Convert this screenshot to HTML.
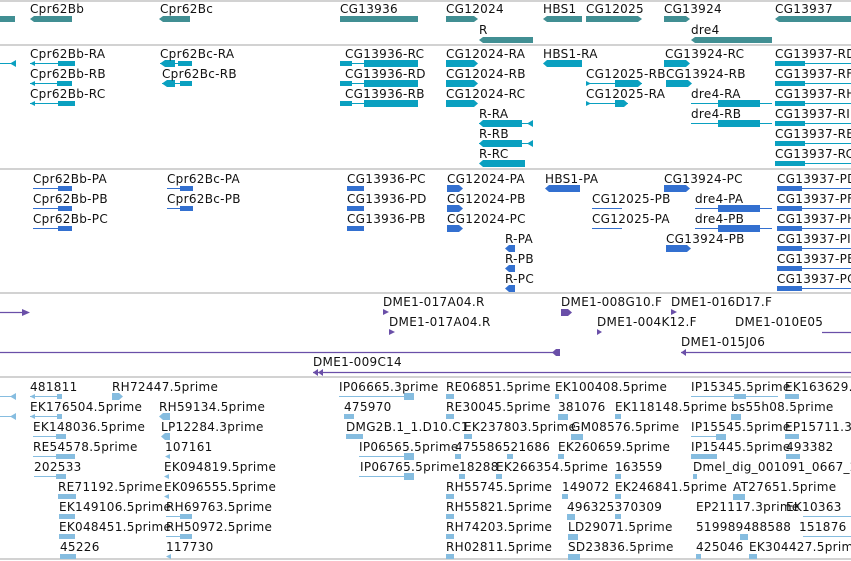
<!DOCTYPE html>
<html><head><meta charset="utf-8"><style>
html,body{margin:0;padding:0;background:#fff;overflow:hidden}
svg{display:block}
text{font-family:"DejaVu Sans","Liberation Sans",sans-serif;font-size:12px;letter-spacing:0.3px;fill:#111}
</style></head><body>
<svg width="851" height="561" viewBox="0 0 851 561" xmlns="http://www.w3.org/2000/svg">
<g stroke="#c4c4c4" stroke-width="1.5">
<line x1="0" y1="1" x2="851" y2="1"/><line x1="0" y1="45" x2="851" y2="45"/>
<line x1="0" y1="169" x2="851" y2="169"/><line x1="0" y1="293" x2="851" y2="293"/>
<line x1="0" y1="377" x2="851" y2="377"/><line x1="0" y1="559" x2="851" y2="559"/>
</g>
<!-- Track 1 genes -->
<g fill="#418f93">
<rect x="0" y="16" width="15" height="6"/>
<polygon points="30,19 34,16 72,16 72,22 34,22"/>
<polygon points="159,19 163,16 190,16 190,22 163,22"/>
<rect x="340" y="16" width="78" height="6"/>
<polygon points="446,16 474,16 478,19 474,22 446,22"/>
<polygon points="543,19 547,16 582,16 582,22 547,22"/>
<polygon points="586,16 638,16 642,19 638,22 586,22"/>
<polygon points="664,16 686,16 690,19 686,22 664,22"/>
<polygon points="775,19 779,16 851,16 851,22 779,22"/>
<polygon points="479,40 483,37 533,37 533,43 483,43"/>
<polygon points="691,40 695,37 772,37 772,43 695,43"/>
</g>
<text x="30" y="13">Cpr62Bb</text><text x="160" y="13">Cpr62Bc</text><text x="340" y="13">CG13936</text>
<text x="446" y="13">CG12024</text><text x="543" y="13">HBS1</text><text x="586" y="13">CG12025</text>
<text x="664" y="13">CG13924</text><text x="775" y="13">CG13937</text>
<text x="479" y="34">R</text><text x="691" y="34">dre4</text>
<!-- Track 2 transcripts -->
<g fill="#0aa0c0" stroke="#0aa0c0">
<g stroke-width="1">
<line x1="0" y1="63.5" x2="16" y2="63.5"/>
<line x1="30" y1="63.5" x2="75" y2="63.5"/><line x1="30" y1="83.5" x2="72" y2="83.5"/><line x1="30" y1="103.5" x2="75" y2="103.5"/>
<line x1="160" y1="63.5" x2="192" y2="63.5"/><line x1="162" y1="83.5" x2="192" y2="83.5"/>
<line x1="340" y1="63.5" x2="418" y2="63.5"/><line x1="340" y1="83.5" x2="418" y2="83.5"/><line x1="340" y1="103.5" x2="418" y2="103.5"/>
<line x1="586" y1="83.5" x2="642" y2="83.5"/><line x1="586" y1="103.5" x2="628" y2="103.5"/>
<line x1="691" y1="103.5" x2="772" y2="103.5"/><line x1="691" y1="123.5" x2="772" y2="123.5"/>
<line x1="775" y1="63.5" x2="851" y2="63.5"/><line x1="775" y1="83.5" x2="851" y2="83.5"/><line x1="775" y1="103.5" x2="851" y2="103.5"/>
<line x1="775" y1="123.5" x2="851" y2="123.5"/><line x1="775" y1="143.5" x2="851" y2="143.5"/><line x1="775" y1="163.5" x2="851" y2="163.5"/>
<line x1="479" y1="123.5" x2="533" y2="123.5"/><line x1="479" y1="143.5" x2="533" y2="143.5"/>
</g>
<g stroke="none">
<polygon points="10,63.5 16,60 16,67"/>
<rect x="58" y="61" width="17" height="5"/><rect x="57" y="81" width="15" height="5"/><rect x="58" y="101" width="17" height="5"/>
<polygon points="30,63.5 35,61 35,66"/><polygon points="30,83.5 35,81 35,86"/><polygon points="30,103.5 35,101 35,106"/>
<polygon points="160,63.5 165,60 175,60 175,67 165,67"/><rect x="178" y="61" width="14" height="5"/>
<polygon points="162,83.5 167,80 175,80 175,87 167,87"/><rect x="180" y="81" width="12" height="5"/>
<rect x="340" y="61" width="12" height="5"/><rect x="364" y="60" width="54" height="7"/>
<rect x="340" y="81" width="12" height="5"/><rect x="364" y="80" width="54" height="7"/>
<rect x="340" y="101" width="12" height="5"/><rect x="364" y="100" width="54" height="7"/>
<polygon points="446,60 474,60 478,63.5 474,67 446,67"/><polygon points="446,80 474,80 478,83.5 474,87 446,87"/><polygon points="446,100 474,100 478,103.5 474,107 446,107"/>
<polygon points="543,63.5 547,60 582,60 582,67 547,67"/>
<polygon points="586,81 591,83.5 586,86"/><polygon points="615,80 638,80 642,83.5 638,87 615,87"/>
<polygon points="586,101 591,103.5 586,106"/><polygon points="615,100 624,100 628,103.5 624,107 615,107"/>
<polygon points="664,60 686,60 690,63.5 686,67 664,67"/><polygon points="666,80 688,80 692,83.5 688,87 666,87"/>
<rect x="718" y="100" width="42" height="7"/><rect x="718" y="120" width="42" height="7"/>
<polygon points="479,123.5 483,120 522,120 522,127 483,127"/><polygon points="527,123.5 533,120 533,127"/>
<polygon points="479,143.5 483,140 522,140 522,147 483,147"/><polygon points="527,143.5 533,140 533,147"/>
<polygon points="479,163.5 483,160 525,160 525,167 483,167"/>
<rect x="775" y="61" width="30" height="5"/><rect x="775" y="81" width="30" height="5"/><rect x="775" y="101" width="30" height="5"/>
<rect x="775" y="121" width="30" height="5"/><rect x="775" y="141" width="30" height="5"/><rect x="775" y="161" width="30" height="5"/>
</g></g>
<text x="30" y="58">Cpr62Bb-RA</text><text x="160" y="58">Cpr62Bc-RA</text><text x="345" y="58">CG13936-RC</text><text x="446" y="58">CG12024-RA</text><text x="543" y="58">HBS1-RA</text><text x="665" y="58">CG13924-RC</text><text x="775" y="58">CG13937-RD</text>
<text x="30" y="78">Cpr62Bb-RB</text><text x="162" y="78">Cpr62Bc-RB</text><text x="345" y="78">CG13936-RD</text><text x="446" y="78">CG12024-RB</text><text x="586" y="78">CG12025-RB</text><text x="666" y="78">CG13924-RB</text><text x="775" y="78">CG13937-RF</text>
<text x="30" y="98">Cpr62Bb-RC</text><text x="345" y="98">CG13936-RB</text><text x="446" y="98">CG12024-RC</text><text x="586" y="98">CG12025-RA</text><text x="691" y="98">dre4-RA</text><text x="775" y="98">CG13937-RH</text>
<text x="479" y="118">R-RA</text><text x="691" y="118">dre4-RB</text><text x="775" y="118">CG13937-RI</text>
<text x="479" y="138">R-RB</text><text x="775" y="138">CG13937-RE</text>
<text x="479" y="158">R-RC</text><text x="775" y="158">CG13937-RC</text>
<!-- Track 3 proteins -->
<g fill="#3370d0" stroke="#3370d0">
<g stroke-width="1">
<line x1="33" y1="188.5" x2="72" y2="188.5"/><line x1="33" y1="208.5" x2="72" y2="208.5"/><line x1="33" y1="228.5" x2="72" y2="228.5"/>
<line x1="167" y1="188.5" x2="193" y2="188.5"/><line x1="167" y1="208.5" x2="193" y2="208.5"/>
<line x1="592" y1="208.5" x2="622" y2="208.5"/><line x1="592" y1="228.5" x2="622" y2="228.5"/>
<line x1="695" y1="208.5" x2="772" y2="208.5"/><line x1="695" y1="228.5" x2="772" y2="228.5"/>
<line x1="777" y1="188.5" x2="851" y2="188.5"/><line x1="777" y1="208.5" x2="851" y2="208.5"/><line x1="777" y1="228.5" x2="851" y2="228.5"/>
<line x1="777" y1="248.5" x2="851" y2="248.5"/><line x1="777" y1="268.5" x2="851" y2="268.5"/><line x1="777" y1="288.5" x2="851" y2="288.5"/>
</g>
<g stroke="none">
<rect x="58" y="186" width="14" height="5"/><rect x="58" y="206" width="14" height="5"/><rect x="58" y="226" width="14" height="5"/>
<rect x="180" y="186" width="13" height="5"/><rect x="180" y="206" width="13" height="5"/>
<rect x="347" y="186" width="17" height="5"/><rect x="347" y="206" width="17" height="5"/><rect x="347" y="226" width="17" height="5"/>
<polygon points="447,185 459,185 463,188.5 459,192 447,192"/><polygon points="447,205 459,205 463,208.5 459,212 447,212"/><polygon points="447,225 459,225 463,228.5 459,232 447,232"/>
<polygon points="545,188.5 549,185 580,185 580,192 549,192"/>
<polygon points="664,185 686,185 690,188.5 686,192 664,192"/>
<polygon points="666,245 687,245 691,248.5 687,252 666,252"/>
<rect x="718" y="205" width="42" height="7"/><rect x="718" y="225" width="42" height="7"/>
<polygon points="505,248.5 509,245 515,245 515,252 509,252"/><polygon points="505,268.5 509,265 515,265 515,272 509,272"/><polygon points="505,288.5 509,285 515,285 515,292 509,292"/>
<rect x="777" y="186" width="25" height="5"/><rect x="777" y="206" width="25" height="5"/><rect x="777" y="226" width="25" height="5"/>
<rect x="777" y="246" width="25" height="5"/><rect x="777" y="266" width="25" height="5"/><rect x="777" y="286" width="25" height="5"/>
</g></g>
<text x="33" y="183">Cpr62Bb-PA</text><text x="167" y="183">Cpr62Bc-PA</text><text x="347" y="183">CG13936-PC</text><text x="447" y="183">CG12024-PA</text><text x="545" y="183">HBS1-PA</text><text x="664" y="183">CG13924-PC</text><text x="777" y="183">CG13937-PD</text>
<text x="33" y="203">Cpr62Bb-PB</text><text x="167" y="203">Cpr62Bc-PB</text><text x="347" y="203">CG13936-PD</text><text x="447" y="203">CG12024-PB</text><text x="592" y="203">CG12025-PB</text><text x="695" y="203">dre4-PA</text><text x="777" y="203">CG13937-PF</text>
<text x="33" y="223">Cpr62Bb-PC</text><text x="347" y="223">CG13936-PB</text><text x="447" y="223">CG12024-PC</text><text x="592" y="223">CG12025-PA</text><text x="695" y="223">dre4-PB</text><text x="777" y="223">CG13937-PH</text>
<text x="505" y="243">R-PA</text><text x="666" y="243">CG13924-PB</text><text x="777" y="243">CG13937-PI</text>
<text x="505" y="263">R-PB</text><text x="777" y="263">CG13937-PE</text>
<text x="505" y="283">R-PC</text><text x="777" y="283">CG13937-PC</text>
<!-- Track 4 DME -->
<g fill="#6a4fa8" stroke="#6a4fa8">
<g stroke-width="1.2">
<line x1="0" y1="312.5" x2="24" y2="312.5"/><line x1="0" y1="352.5" x2="555" y2="352.5"/>
<line x1="681" y1="352.5" x2="851" y2="352.5"/><line x1="313" y1="372.5" x2="851" y2="372.5"/>
<line x1="822" y1="332.5" x2="851" y2="332.5"/>
</g>
<g stroke="none">
<polygon points="22,309 30,312.5 22,316"/>
<polygon points="383,309 389,312 383,315"/><polygon points="389,329 395,332 389,335"/>
<polygon points="561,309 568,309 572,312.5 568,316 561,316"/><polygon points="671,309 677,312 671,315"/>
<polygon points="597,329 602,332 597,335"/>
<polygon points="552,352.5 556,349 560,349 560,356 556,356"/>
<polygon points="681,352.5 686,349 686,356"/>
<polygon points="313,372.5 318,369 318,376"/><polygon points="318,372.5 323,369 323,376"/>
</g></g>
<text x="383" y="306">DME1-017A04.R</text><text x="561" y="306">DME1-008G10.F</text><text x="671" y="306">DME1-016D17.F</text>
<text x="389" y="326">DME1-017A04.R</text><text x="597" y="326">DME1-004K12.F</text><text x="735" y="326">DME1-010E05</text>
<text x="681" y="346">DME1-015J06</text>
<text x="313" y="366">DME1-009C14</text>
<!-- Track 5 ESTs -->
<g fill="#86bde0" stroke="#86bde0">
<g stroke-width="1">
<line x1="0" y1="396.5" x2="16" y2="396.5"/><line x1="0" y1="416.5" x2="16" y2="416.5"/>
<line x1="30" y1="396.5" x2="62" y2="396.5"/><line x1="30" y1="416.5" x2="62" y2="416.5"/>
<line x1="33" y1="436.5" x2="66" y2="436.5"/><line x1="33" y1="456.5" x2="75" y2="456.5"/><line x1="34" y1="476.5" x2="66" y2="476.5"/>
<line x1="339" y1="396.5" x2="414" y2="396.5"/><line x1="359" y1="456.5" x2="414" y2="456.5"/><line x1="359" y1="476.5" x2="414" y2="476.5"/>
<line x1="166" y1="516.5" x2="192" y2="516.5"/><line x1="166" y1="536.5" x2="192" y2="536.5"/>
<line x1="691" y1="396.5" x2="778" y2="396.5"/><line x1="691" y1="436.5" x2="725" y2="436.5"/>
<line x1="803" y1="516.5" x2="851" y2="516.5"/><line x1="803" y1="536.5" x2="851" y2="536.5"/>
</g>
<g stroke="none">
<polygon points="10,396.5 16,393 16,400"/><polygon points="10,416.5 16,413 16,420"/>
<polygon points="30,396.5 35,394 35,399"/><polygon points="30,416.5 35,414 35,419"/><rect x="57" y="394" width="5" height="5"/><rect x="57" y="414" width="5" height="5"/>
<rect x="56" y="434" width="10" height="5"/><rect x="56" y="454" width="19" height="5"/><rect x="56" y="474" width="10" height="5"/>
<rect x="58" y="494" width="18" height="5"/><rect x="59" y="514" width="16" height="5"/><rect x="59" y="534" width="16" height="5"/><rect x="60" y="554" width="16" height="5"/>
<polygon points="112,393 119,393 123,396.5 119,400 112,400"/>
<polygon points="159,416.5 163,413 170,413 170,420 163,420"/><polygon points="161,436.5 165,433 170,433 170,440 165,440"/>
<polygon points="165,456.5 170,454 170,459"/><polygon points="164,476.5 169,474 169,479"/><polygon points="164,496.5 169,494 169,499"/>
<rect x="180" y="514" width="12" height="5"/><rect x="180" y="534" width="12" height="5"/><polygon points="166,556.5 171,554 171,559"/>
<rect x="404" y="393" width="10" height="7"/><rect x="344" y="414" width="10" height="5"/><rect x="346" y="434" width="17" height="5"/>
<rect x="404" y="453" width="10" height="7"/><rect x="404" y="473" width="10" height="7"/>
<rect x="446" y="394" width="8" height="5"/><rect x="446" y="414" width="8" height="5"/><rect x="464" y="434" width="8" height="5"/>
<rect x="455" y="454" width="6" height="5"/><rect x="459" y="474" width="6" height="5"/><rect x="496" y="474" width="6" height="5"/><rect x="507" y="454" width="6" height="5"/>
<rect x="446" y="494" width="8" height="5"/><rect x="446" y="514" width="8" height="5"/><rect x="446" y="534" width="8" height="5"/><rect x="446" y="554" width="8" height="5"/>
<rect x="555" y="394" width="4" height="5"/><rect x="558" y="414" width="10" height="6"/><rect x="571" y="434" width="12" height="6"/>
<rect x="558" y="454" width="6" height="5"/><rect x="562" y="494" width="6" height="5"/><rect x="567" y="514" width="8" height="6"/>
<rect x="568" y="534" width="10" height="6"/><rect x="568" y="554" width="12" height="6"/>
<rect x="615" y="414" width="6" height="5"/><rect x="615" y="474" width="6" height="5"/><rect x="615" y="494" width="6" height="5"/><rect x="615" y="514" width="6" height="5"/>
<rect x="734" y="394" width="12" height="5"/><rect x="731" y="414" width="10" height="6"/><rect x="716" y="434" width="10" height="6"/>
<rect x="691" y="454" width="26" height="5"/><rect x="693" y="474" width="4" height="5"/><rect x="733" y="494" width="12" height="6"/>
<rect x="740" y="534" width="8" height="6"/><rect x="696" y="554" width="5" height="5"/><rect x="749" y="554" width="8" height="5"/>
<rect x="785" y="394" width="14" height="5"/><rect x="785" y="434" width="14" height="5"/><rect x="786" y="454" width="14" height="5"/>
</g></g>
<text x="30" y="391">481811</text><text x="112" y="391">RH72447.5prime</text><text x="339" y="391">IP06665.3prime</text><text x="446" y="391">RE06851.5prime</text><text x="555" y="391">EK100408.5prime</text><text x="691" y="391">IP15345.5prime</text><text x="785" y="391">EK163629.</text>
<text x="30" y="411">EK176504.5prime</text><text x="159" y="411">RH59134.5prime</text><text x="344" y="411">475970</text><text x="446" y="411">RE30045.5prime</text><text x="558" y="411">381076</text><text x="615" y="411">EK118148.5prime</text><text x="731" y="411">bs55h08.5prime</text>
<text x="33" y="431">EK148036.5prime</text><text x="161" y="431">LP12284.3prime</text><text x="346" y="431">DMG2B.1_1.D10.C1</text><text x="464" y="431">EK237803.5prime</text><text x="571" y="431">GM08576.5prime</text><text x="691" y="431">IP15545.5prime</text><text x="785" y="431">EP15711.3</text>
<text x="33" y="451">RE54578.5prime</text><text x="165" y="451">107161</text><text x="359" y="451">IP06565.5prime</text><text x="455" y="451">475586521686</text><text x="558" y="451">EK260659.5prime</text><text x="691" y="451">IP15445.5prime</text><text x="786" y="451">493382</text>
<text x="34" y="471">202533</text><text x="164" y="471">EK094819.5prime</text><text x="360" y="471">IP06765.5prime</text><text x="459" y="471">18288</text><text x="496" y="471">EK266354.5prime</text><text x="615" y="471">163559</text><text x="693" y="471">Dmel_dig_001091_0667_2</text>
<text x="58" y="491">RE71192.5prime</text><text x="164" y="491">EK096555.5prime</text><text x="446" y="491">RH55745.5prime</text><text x="562" y="491">149072</text><text x="615" y="491">EK246841.5prime</text><text x="733" y="491">AT27651.5prime</text>
<text x="59" y="511">EK149106.5prime</text><text x="166" y="511">RH69763.5prime</text><text x="446" y="511">RH55821.5prime</text><text x="567" y="511">496325370309</text><text x="696" y="511">EP21117.3prime</text><text x="786" y="511">EK10363</text>
<text x="59" y="531">EK048451.5prime</text><text x="166" y="531">RH50972.5prime</text><text x="446" y="531">RH74203.5prime</text><text x="568" y="531">LD29071.5prime</text><text x="696" y="531">519989488588</text><text x="799" y="531">151876</text>
<text x="60" y="551">45226</text><text x="166" y="551">117730</text><text x="446" y="551">RH02811.5prime</text><text x="568" y="551">SD23836.5prime</text><text x="696" y="551">425046</text><text x="749" y="551">EK304427.5prime</text>
</svg>
</body></html>
